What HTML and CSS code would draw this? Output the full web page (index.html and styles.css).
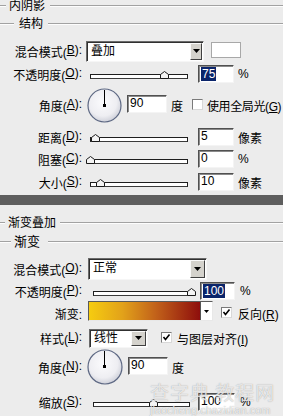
FILE: index.html
```html
<!DOCTYPE html>
<html lang="zh">
<head>
<meta charset="utf-8">
<link rel="stylesheet" href="styles.css">
</head>
<body>
<div class="page">
  <section class="panel">
    <div class="legend lg-a"><span class="rule-l"></span><span class="legend-text">内阴影</span><span class="rule"></span></div>
    <div class="legend lg-b"><span class="rule-l"></span><span class="legend-text">结构</span><span class="rule"></span></div>

    <div class="row a1">
      <span class="label">混合模式(<u>B</u>):</span>
      <div class="select sel-a"><span class="sel-text">叠加</span><span class="sel-btn"><svg width="7" height="4" viewBox="0 0 7 4"><polygon points="0,0 7,0 3.5,4" fill="#000"/></svg></span></div>
      <span class="swatch"></span>
    </div>

    <div class="row a2">
      <span class="label">不透明度(<u>O</u>):</span>
      <div class="slider sl-a"><span class="track"></span><svg class="thumb" style="left:70px" width="9" height="8" viewBox="0 0 9 8"><polygon points="0.5,7.5 0.5,3.5 4.5,0.5 8.5,3.5 8.5,7.5" fill="#f4f4f4" stroke="#1a1a1a"/></svg></div>
      <span class="field fd-a"><span class="sel">75</span></span>
      <span class="unit">%</span>
    </div>

    <div class="row a3">
      <span class="label">角度(<u>A</u>):</span>
      <svg class="dial" width="35" height="35" viewBox="0 0 35 35">
        <defs><radialGradient id="dg1" cx="45%" cy="40%" r="60%"><stop offset="0" stop-color="#fbfbfd"/><stop offset="0.7" stop-color="#eeeef2"/><stop offset="1" stop-color="#cfd1da"/></radialGradient></defs>
        <circle cx="17.5" cy="17.5" r="16.5" fill="url(#dg1)" stroke="#5d6883" stroke-width="1.2"/>
        <rect x="17" y="2" width="1" height="16" fill="#000"/>
        <rect x="16" y="16" width="3" height="3" fill="#000"/>
      </svg>
      <span class="field fd-ang">90</span>
      <span class="unit">度</span>
      <span class="check cb-global"></span>
      <span class="cb-text cb-tight">使用全局光(<u>G</u>)</span>
    </div>

    <div class="row a4">
      <span class="label">距离(<u>D</u>):</span>
      <div class="slider sl-a"><span class="track"></span><svg class="thumb" style="left:1px" width="9" height="8" viewBox="0 0 9 8"><polygon points="0.5,7.5 0.5,3.5 4.5,0.5 8.5,3.5 8.5,7.5" fill="#f4f4f4" stroke="#1a1a1a"/></svg></div>
      <span class="field fd-a">5</span>
      <span class="unit">像素</span>
    </div>

    <div class="row a5">
      <span class="label">阻塞(<u>C</u>):</span>
      <div class="slider sl-a"><span class="track"></span><svg class="thumb" style="left:-4px" width="9" height="8" viewBox="0 0 9 8"><polygon points="0.5,7.5 0.5,3.5 4.5,0.5 8.5,3.5 8.5,7.5" fill="#f4f4f4" stroke="#1a1a1a"/></svg></div>
      <span class="field fd-a">0</span>
      <span class="unit">%</span>
    </div>

    <div class="row a6">
      <span class="label">大小(<u>S</u>):</span>
      <div class="slider sl-a"><span class="track"></span><svg class="thumb" style="left:6px" width="9" height="8" viewBox="0 0 9 8"><polygon points="0.5,7.5 0.5,3.5 4.5,0.5 8.5,3.5 8.5,7.5" fill="#f4f4f4" stroke="#1a1a1a"/></svg></div>
      <span class="field fd-a">10</span>
      <span class="unit">像素</span>
    </div>
  </section>

  <div class="darkbar"></div>

  <section class="panel">
    <div class="legend lg-c"><span class="rule-l"></span><span class="legend-text">渐变叠加</span><span class="rule"></span></div>
    <div class="legend lg-d"><span class="rule-l"></span><span class="legend-text">渐变</span><span class="rule"></span></div>

    <div class="row b1">
      <span class="label">混合模式(<u>O</u>):</span>
      <div class="select sel-b"><span class="sel-text">正常</span><span class="sel-btn"><svg width="7" height="4" viewBox="0 0 7 4"><polygon points="0,0 7,0 3.5,4" fill="#000"/></svg></span></div>
    </div>

    <div class="row b2">
      <span class="label">不透明度(<u>P</u>):</span>
      <div class="slider sl-b"><span class="track"></span><svg class="thumb" style="left:94px" width="9" height="8" viewBox="0 0 9 8"><polygon points="0.5,7.5 0.5,3.5 4.5,0.5 8.5,3.5 8.5,7.5" fill="#f4f4f4" stroke="#1a1a1a"/></svg></div>
      <span class="field fd-b"><span class="sel">100</span></span>
      <span class="unit">%</span>
    </div>

    <div class="row b3">
      <span class="label">渐变:</span>
      <div class="gradbox"><span class="grad"></span><span class="grad-btn"><svg width="5" height="3" viewBox="0 0 5 3"><polygon points="0,0 5,0 2.5,3" fill="#000"/></svg></span></div>
      <span class="check checked cb-rev"><svg width="9" height="9" viewBox="0 0 9 9"><path d="M1.5 4 L3.5 6.5 L7.5 1.5" fill="none" stroke="#000" stroke-width="1.6"/></svg></span>
      <span class="cb-text">反向(<u>R</u>)</span>
    </div>

    <div class="row b4">
      <span class="label">样式(<u>L</u>):</span>
      <div class="select sel-c"><span class="sel-text">线性</span><span class="sel-btn"><svg width="7" height="4" viewBox="0 0 7 4"><polygon points="0,0 7,0 3.5,4" fill="#000"/></svg></span></div>
      <span class="check checked cb-align"><svg width="9" height="9" viewBox="0 0 9 9"><path d="M1.5 4 L3.5 6.5 L7.5 1.5" fill="none" stroke="#000" stroke-width="1.6"/></svg></span>
      <span class="cb-text">与图层对齐(<u>I</u>)</span>
    </div>

    <div class="row b5">
      <span class="label">角度(<u>N</u>):</span>
      <svg class="dial" width="36" height="36" viewBox="0 0 36 36">
        <defs><radialGradient id="dg2" cx="45%" cy="40%" r="60%"><stop offset="0" stop-color="#fbfbfd"/><stop offset="0.7" stop-color="#eeeef2"/><stop offset="1" stop-color="#cfd1da"/></radialGradient></defs>
        <circle cx="18" cy="18" r="17" fill="url(#dg2)" stroke="#5d6883" stroke-width="1.2"/>
        <rect x="17" y="2" width="1" height="16" fill="#000"/>
        <rect x="16" y="16" width="3" height="3" fill="#000"/>
      </svg>
      <span class="field fd-ang2">90</span>
      <span class="unit">度</span>
    </div>

    <div class="row b6">
      <span class="label">缩放(<u>S</u>):</span>
      <div class="slider sl-b"><span class="track"></span><svg class="thumb" style="left:56px" width="9" height="8" viewBox="0 0 9 8"><polygon points="0.5,7.5 0.5,3.5 4.5,0.5 8.5,3.5 8.5,7.5" fill="#f4f4f4" stroke="#1a1a1a"/></svg></div>
      <span class="field fd-c">100</span>
      <span class="unit">%</span>
    </div>
  </section>

  <div class="watermark">
    <span class="wm-big">查字典 教程网</span>
    <span class="wm-small">jiaocheng.chazidian.com</span>
  </div>
</div>
</body>
</html>
```

FILE: styles.css
```css
* { box-sizing: border-box; }
html, body { margin: 0; padding: 0; }
body {
  background: #ececec;
  font-family: "Liberation Sans", "Noto Sans CJK SC", sans-serif;
  font-size: 12px;
  color: #000;
}
u { text-decoration: underline; text-underline-offset: 1px; }
.page { position: relative; width: 283px; height: 416px; overflow: hidden; }
.panel { display: flex; flex-direction: column; }

/* group headings */
.legend { display: flex; align-items: center; height: 12px; line-height: 12px; white-space: nowrap; }
.rule, .rule-l { height: 2px; border-top: 1px solid #a2a2a2; border-bottom: 1px solid #fdfdfd; flex: none; }
.rule { flex: 1; }
.lg-a { margin-top: 0; }
.lg-a .rule-l { width: 6px; }
.lg-a .legend-text { padding: 0 5px 0 3px; }
.lg-b { margin-top: 6px; }
.lg-b .rule-l { width: 14px; }
.lg-b .legend-text { padding: 0 5px 0 5px; }
.lg-c { margin-top: 12px; }
.lg-c .rule-l { width: 5px; }
.lg-c .legend-text { padding: 0 4px 0 3px; }
.lg-d { margin-top: 7px; }
.lg-d .rule-l { width: 11px; }
.lg-d .legend-text { padding: 0 8px 0 3px; font-size: 13px; }

/* rows */
.row { display: flex; align-items: center; height: 20px; white-space: nowrap; }
.label { width: 82px; flex: none; display: flex; justify-content: flex-end; }
.a1 { margin-top: 10px; height: 22px; }
.a2 { margin-top: 2px; }
.a3 { margin-top: 3px; height: 36px; }
.a4 { margin-top: 4px; }
.a5 { margin-top: 2px; }
.a6 { margin-top: 3px; }
.b1 { margin-top: 10px; height: 22px; }
.b2 { margin-top: 1px; }
.b3 { margin-top: 2px; }
.b4 { margin-top: 5px; }
.b5 { margin-top: 1px; height: 36px; }
.b6 { margin-top: 7px; }

/* dropdowns */
.select {
  display: flex; align-items: stretch; flex: none;
  background: #fff;
  border: 1px solid; border-color: #6a6a6a #f6f6f6 #f6f6f6 #6a6a6a;
  box-shadow: inset 1px 1px 0 #303030;
  padding: 1px;
}
.sel-text { flex: 1; padding-left: 3px; line-height: 17px; }
.sel-btn {
  width: 12px; flex: none; display: flex; align-items: center; justify-content: center;
  background: #d4d2cc;
  border: 1px solid; border-color: #fafafa #404040 #404040 #fafafa;
}
.sel-a { margin-left: 4px; width: 118px; height: 21px; }
.sel-b { margin-left: 6px; width: 119px; height: 22px; }
.sel-b .sel-btn { width: 15px; }
.sel-c { margin-left: 7px; width: 59px; height: 19px; }
.sel-c .sel-btn { width: 15px; }
.sel-c .sel-text { line-height: 15px; }
.swatch { margin-left: 7px; width: 30px; height: 16px; background: #fff; border: 1px solid #a8a8a8; margin-top: -2px; flex: none; }

/* sliders */
.slider { position: relative; height: 10px; flex: none; margin-top: -1px; }
.sl-a { margin-left: 8px; width: 98px; }
.sl-b { margin-left: 11px; width: 97px; }
.track { display: block; margin-top: 5px; height: 5px; background: #fff; border: 1px solid #1e1e1e; border-bottom-color: #3a3a3a; }
.thumb { position: absolute; top: 2px; }

/* text fields */
.field {
  flex: none; height: 18px; line-height: 15px;
  background: #fff; padding-left: 2px;
  border: 1px solid; border-color: #505050 #f4f4f4 #f4f4f4 #505050;
  box-shadow: inset 1px 1px 0 #8a8a8a;
}
.sel { background: #0a246a; color: #fff; padding: 0 1px; display: inline-block; line-height: 14px; margin-top: 1px; }
.fd-a { margin-left: 10px; width: 36px; }
.fd-b { margin-left: 10px; width: 35px; }
.fd-c { margin-left: 8px; width: 37px; }
.fd-ang { margin-left: 5px; width: 40px; margin-top: -2px; }
.fd-ang2 { margin-left: 5px; width: 40px; margin-top: -2px; }
.unit { margin-left: 4px; }
.b2 .unit, .b6 .unit { margin-left: 5px; }

/* dial */
.dial { flex: none; margin-left: 5px; display: block; }

/* checkboxes */
.check {
  flex: none; width: 11px; height: 11px; background: #fff;
  border: 1px solid; border-color: #7a7a7a #d8d8d8 #d8d8d8 #7a7a7a;
  display: flex; align-items: center; justify-content: center;
}
.cb-text { margin-left: 5px; }
.cb-global { margin-left: 9px; margin-top: -2px; }
.cb-tight { margin-left: 4px; letter-spacing: -0.4px; }
.cb-rev { margin-left: 8px; margin-top: -2px; }
.cb-rev + .cb-text { margin-left: 6px; }
.cb-align { margin-left: 13px; margin-top: -2px; }

/* gradient picker */
.gradbox {
  flex: none; margin-left: 6px; width: 125px; height: 20px; display: flex;
  border: 1px solid; border-color: #5a5a5a #e8e8e8 #e8e8e8 #5a5a5a;
  background: #fff; margin-top: -4px;
}
.grad { flex: 1; background: linear-gradient(to right, #f6cc10 0%, #e2a21a 30%, #c2621a 60%, #8e0e0c 100%); }
.grad-btn { width: 12px; flex: none; display: flex; align-items: center; justify-content: center; border-left: 1px solid #555; background: #fff; }

/* dark separator */
.darkbar { margin-top: 3px; height: 10px; background: #5e5e5e; }

/* watermark overlay */
.watermark { position: absolute; left: 150px; top: 380px; width: 133px; display: flex; flex-direction: column; }
.wm-big { font-family: "Noto Sans CJK SC", sans-serif; font-size: 19px; line-height: 24px; color: rgba(255,255,255,0.72); text-shadow: 0 0 1px rgba(120,120,120,0.7); letter-spacing: 1px; }
.wm-small { font-size: 11px; line-height: 12px; color: rgba(255,255,255,0.8); text-shadow: 0 0 1px rgba(120,120,120,0.8); }
```
